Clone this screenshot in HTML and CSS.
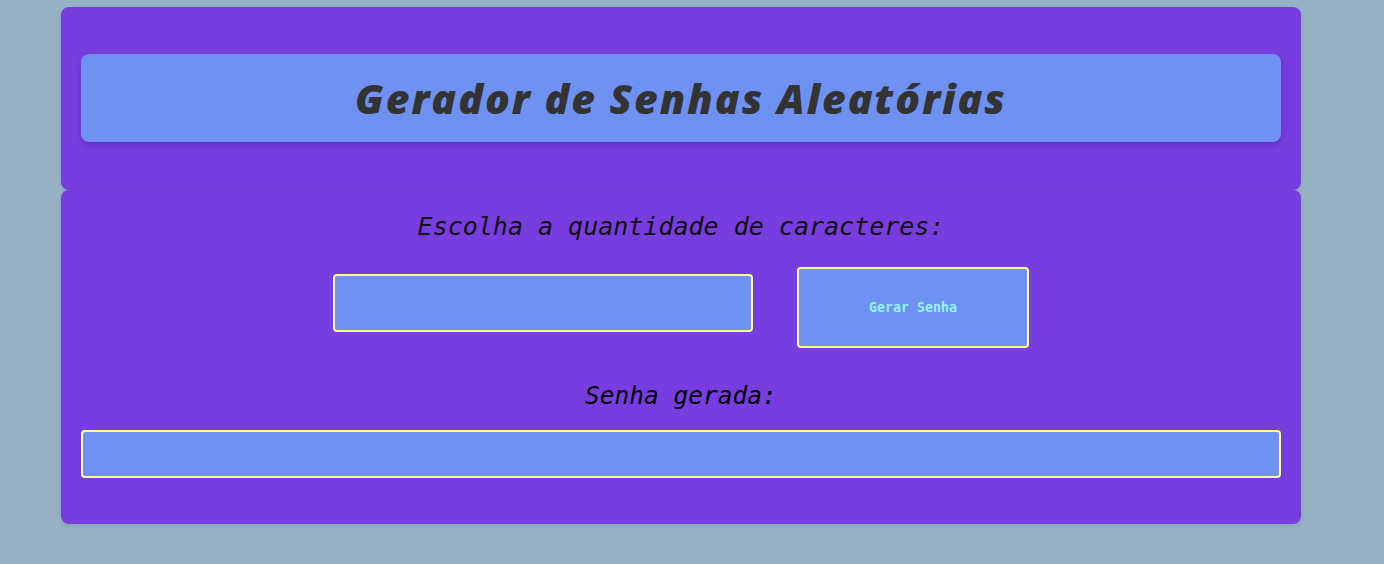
FILE: index.html
```html
<!DOCTYPE html>
<html lang="pt-BR">
<head>
<meta charset="utf-8">
<title>Gerador de Senhas Aleatórias</title>
<link rel="stylesheet" href="styles.css">
</head>
<body>
<main class="app">
  <section class="card card-top">
    <header class="title-box">
      <h1 class="title">Gerador de Senhas Aleatórias</h1>
    </header>
  </section>
  <section class="card card-bottom">
    <p class="label">Escolha a quantidade de caracteres:</p>
    <div class="controls">
      <input class="qty-input" type="number">
      <button class="gen-btn" type="button">Gerar Senha</button>
    </div>
    <h2 class="result-label">Senha gerada:</h2>
    <input class="result-input" type="text">
  </section>
</main>
</body>
</html>
```

FILE: styles.css
```css
html, body {
  margin: 0;
  padding: 0;
}
body {
  background: #95b3c4;
  height: 564px;
  overflow: hidden;
}
.app {
  width: 1240px;
  margin: 7px 0 0 61px;
  display: flex;
  flex-direction: column;
}
.card {
  background: #783ddf;
  border-radius: 8px;
  box-shadow: 0 2px 4px rgba(0, 0, 0, 0.1);
  padding: 0 20px;
}
.card-top {
  height: 183px;
  box-sizing: border-box;
  padding-top: 47px;
}
.title-box {
  height: 88px;
  background: #6e91f2;
  border-radius: 8px;
  box-shadow: 0 3px 6px rgba(60, 20, 140, 0.35);
  display: flex;
  align-items: center;
  justify-content: center;
}
.title {
  margin: 0;
  font-family: "Open Sans", "Liberation Sans", sans-serif;
  font-weight: 800;
  font-style: italic;
  font-size: 41px;
  letter-spacing: 2px;
  color: #333333;
}
.card-bottom {
  height: 334px;
  box-sizing: border-box;
  padding-top: 19px;
  display: flex;
  flex-direction: column;
  align-items: center;
}
.label {
  margin: 0;
  height: 36px;
  line-height: 36px;
  font-family: "DejaVu Sans Mono", monospace;
  font-style: italic;
  font-size: 25px;
  color: #111;
}
.controls {
  display: flex;
  align-items: flex-start;
  gap: 44px;
  margin-top: 22px;
}
.qty-input {
  margin-top: 7px;
  width: 420px;
  height: 58px;
  box-sizing: border-box;
  background: #6e91f2;
  border: 2px solid #ffff99;
  border-radius: 4px;
  outline: none;
}
.gen-btn {
  width: 232px;
  height: 81px;
  box-sizing: border-box;
  background: #6e91f2;
  border: 2px solid #ffff99;
  border-radius: 4px;
  color: #8cf5f5;
  font-family: "DejaVu Sans Mono", monospace;
  font-size: 13.3px;
  font-weight: bold;
  padding: 0;
}
.result-label {
  margin: 30px 0 0;
  height: 36px;
  line-height: 36px;
  font-family: "DejaVu Sans Mono", monospace;
  font-style: italic;
  font-weight: normal;
  font-size: 24.5px;
  color: #000;
}
.result-input {
  margin-top: 16px;
  width: 100%;
  height: 48px;
  box-sizing: border-box;
  background: #6e91f2;
  border: 2px solid #ffff99;
  border-radius: 4px;
  outline: none;
}
```
